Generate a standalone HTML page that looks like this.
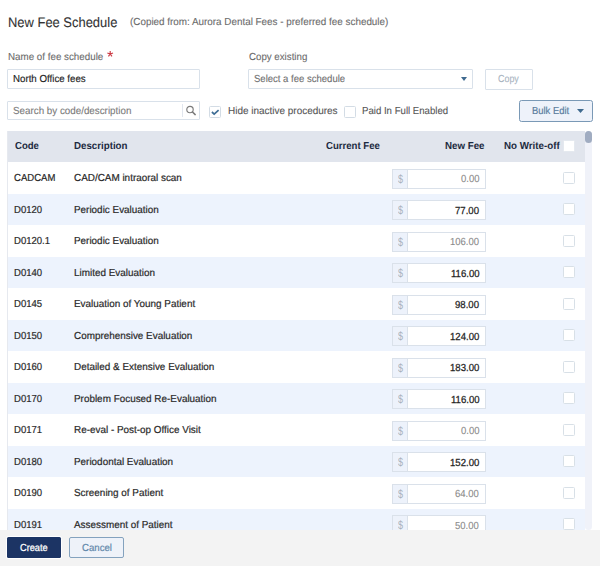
<!DOCTYPE html>
<html><head><meta charset="utf-8">
<style>
*{box-sizing:border-box;margin:0;padding:0}
html,body{width:600px;height:566px;overflow:hidden;background:#fff;font-family:"Liberation Sans",sans-serif;position:relative}
.abs{position:absolute}
.t{position:absolute;white-space:nowrap;line-height:1;transform-origin:0 0;text-rendering:geometricPrecision;font-family:"Liberation Sans",sans-serif}
.inp{border:1px solid #d9e1ea;border-radius:1px;background:#fff}
.table{position:absolute;left:7px;top:131px;width:578px;height:399px;overflow:hidden;border-left:1px solid #e6e9ef}
.thead{position:absolute;left:0;top:0;width:578px;height:31px;background:#e1e5ed}
.row{position:absolute;left:0;width:578px;height:31.5px}
.addon{position:absolute;left:384px;top:6.5px;width:15px;height:20px;background:#edf2fb;border:1px solid #dae1ea;border-right:none}
.fee{position:absolute;left:399px;top:6.5px;width:79px;height:20px;background:#fff;border:1px solid #dae1ea}
.rcb{position:absolute;left:555.3px;top:9.7px;width:12px;height:12px;border:1px solid #d8e0e7;border-radius:1.5px;background:#fff}
.sbtrack{position:absolute;left:585px;top:130.5px;width:7px;height:399px;background:#f0f2f9;border-radius:3.5px}
.sbthumb{position:absolute;left:585px;top:130.5px;width:7.3px;height:12.5px;background:#a0acc1;border-radius:3.6px}
.footer{position:absolute;left:0;top:530px;width:600px;height:36px;background:#f3f3f3}
.btn{position:absolute;top:537.2px;height:21.3px}
.req{position:absolute;left:106.5px;top:51px;color:#c9333c;font-size:14px;line-height:12px}
</style></head><body>
<svg class="abs" style="left:0;top:0" width="600" height="70" viewBox="0 0 600 70"><path d="M110.20 54.00L110.20 51.00M110.20 54.00L113.05 53.07M110.20 54.00L111.96 56.43M110.20 54.00L108.44 56.43M110.20 54.00L107.35 53.07" stroke="#cc3a44" stroke-width="1.15" stroke-linecap="butt" fill="none"/></svg>
<div class="abs inp" style="left:7px;top:69px;width:193px;height:20px"></div>
<div class="abs inp" style="left:248px;top:69px;width:225px;height:20px"></div>
<svg class="abs" style="left:461px;top:77px" width="6" height="4" viewBox="0 0 6 4"><path d="M0 0H6L3 4Z" fill="#3f6a8f"/></svg>
<div class="abs inp" style="left:485px;top:69px;width:48px;height:20.5px"></div>

<div class="abs inp" style="left:7px;top:100.5px;width:193px;height:19.5px"></div>
<div class="abs" style="left:182px;top:103.5px;width:1px;height:13px;background:#e1e6ee"></div>
<svg class="abs" style="left:185px;top:105px" width="12" height="12" viewBox="0 0 12 12"><circle cx="5" cy="4.5" r="3.2" fill="none" stroke="#7a7a7a" stroke-width="1.15"/><path d="M7.5 7L10.2 9.6" stroke="#7a7a7a" stroke-width="1.5" stroke-linecap="round"/></svg>

<div class="abs" style="left:209px;top:105.5px;width:12px;height:12px;border:1px solid #d3dce5;border-radius:1.5px;background:#fff"></div>
<svg class="abs" style="left:209px;top:105.5px" width="12" height="12" viewBox="0 0 12 12"><path d="M2.9 6L5.2 8.1L9.6 4.1" fill="none" stroke="#3f6e96" stroke-width="1.7"/></svg>
<div class="abs" style="left:344px;top:105.5px;width:12px;height:12px;border:1px solid #d3dce5;border-radius:1.5px;background:#fff"></div>

<div class="abs" style="left:519px;top:100px;width:74px;height:21.5px;border:1.2px solid #7a99b6;border-radius:2.5px;background:#eef2fa"></div>
<svg class="abs" style="left:577px;top:109px" width="7" height="4" viewBox="0 0 7 4"><path d="M0 0H7L3.5 4Z" fill="#3f6a8f"/></svg>

<div class="table">
<div class="thead"><div class="rcb" style="top:9.3px;border-color:#e4e9ef"></div></div>
<div class="row" style="top:31.0px;background:#ffffff"><div class="addon"></div><div class="fee"></div><div class="rcb"></div></div>
<div class="row" style="top:62.5px;background:#edf3fd"><div class="addon"></div><div class="fee"></div><div class="rcb"></div></div>
<div class="row" style="top:94.0px;background:#ffffff"><div class="addon"></div><div class="fee"></div><div class="rcb"></div></div>
<div class="row" style="top:125.5px;background:#edf3fd"><div class="addon"></div><div class="fee"></div><div class="rcb"></div></div>
<div class="row" style="top:157.0px;background:#ffffff"><div class="addon"></div><div class="fee"></div><div class="rcb"></div></div>
<div class="row" style="top:188.5px;background:#edf3fd"><div class="addon"></div><div class="fee"></div><div class="rcb"></div></div>
<div class="row" style="top:220.0px;background:#ffffff"><div class="addon"></div><div class="fee"></div><div class="rcb"></div></div>
<div class="row" style="top:251.5px;background:#edf3fd"><div class="addon"></div><div class="fee"></div><div class="rcb"></div></div>
<div class="row" style="top:283.0px;background:#ffffff"><div class="addon"></div><div class="fee"></div><div class="rcb"></div></div>
<div class="row" style="top:314.5px;background:#edf3fd"><div class="addon"></div><div class="fee"></div><div class="rcb"></div></div>
<div class="row" style="top:346.0px;background:#ffffff"><div class="addon"></div><div class="fee"></div><div class="rcb"></div></div>
<div class="row" style="top:377.5px;background:#edf3fd"><div class="addon"></div><div class="fee"></div><div class="rcb"></div></div>
</div>
<div class="sbtrack"></div>
<div class="sbthumb"></div>

<div class="footer"></div>
<div class="btn" style="left:7.3px;width:54px;background:#1c3464;border-radius:1.5px;box-shadow:0 0 0 1px #fff"></div>
<div class="btn" style="left:69px;width:55px;background:#eef2f9;border:1.2px solid #84a2be;border-radius:2px"></div>
<div class="t" style="left:7.94px;top:15.72px;font-size:13.8px;color:#333;transform:scaleX(0.9379);-webkit-text-stroke:0.1px #333;">New Fee Schedule</div>
<div class="t" style="left:130.00px;top:17.63px;font-size:10.2px;color:#6b6b6b;transform:scaleX(0.9686);-webkit-text-stroke:0.1px #6b6b6b;">(Copied from: Aurora Dental Fees - preferred fee schedule)</div>
<div class="t" style="left:8.00px;top:53.23px;font-size:10.2px;color:#6b6b6b;transform:scaleX(0.9614);-webkit-text-stroke:0.1px #6b6b6b;">Name of fee schedule</div>
<div class="t" style="left:13.00px;top:75.43px;font-size:10.2px;color:#222;transform:scaleX(0.9533);-webkit-text-stroke:0.15px #222;">North Office fees</div>
<div class="t" style="left:249.00px;top:53.23px;font-size:10.2px;color:#6b6b6b;transform:scaleX(0.9530);-webkit-text-stroke:0.1px #6b6b6b;">Copy existing</div>
<div class="t" style="left:253.60px;top:75.43px;font-size:10.2px;color:#6f6f6f;transform:scaleX(0.9351);-webkit-text-stroke:0.1px #6f6f6f;">Select a fee schedule</div>
<div class="t" style="left:498.00px;top:75.43px;font-size:10.2px;color:#a9b4bf;transform:scaleX(0.8749);-webkit-text-stroke:0.1px #a9b4bf;">Copy</div>
<div class="t" style="left:12.80px;top:106.83px;font-size:10.2px;color:#7a7a7a;transform:scaleX(0.9630);-webkit-text-stroke:0.1px #7a7a7a;">Search by code/description</div>
<div class="t" style="left:227.80px;top:107.33px;font-size:10.2px;color:#555;transform:scaleX(0.9774);-webkit-text-stroke:0.1px #555;">Hide inactive procedures</div>
<div class="t" style="left:362.00px;top:107.33px;font-size:10.2px;color:#555;transform:scaleX(0.9452);-webkit-text-stroke:0.1px #555;">Paid In Full Enabled</div>
<div class="t" style="left:531.70px;top:106.63px;font-size:10.2px;color:#5a7d9e;transform:scaleX(0.9239);-webkit-text-stroke:0.2px #5a7d9e;">Bulk Edit</div>
<div class="t" style="left:14.50px;top:142.33px;font-size:10.2px;color:#1c2a40;font-weight:700;transform:scaleX(0.9398);">Code</div>
<div class="t" style="left:74.25px;top:142.33px;font-size:10.2px;color:#1c2a40;font-weight:700;transform:scaleX(0.9540);">Description</div>
<div class="t" style="left:325.50px;top:142.33px;font-size:10.2px;color:#1c2a40;font-weight:700;transform:scaleX(0.9425);">Current Fee</div>
<div class="t" style="left:444.70px;top:142.33px;font-size:10.2px;color:#1c2a40;font-weight:700;transform:scaleX(0.9552);">New Fee</div>
<div class="t" style="left:503.70px;top:142.33px;font-size:10.2px;color:#1c2a40;font-weight:700;transform:scaleX(0.9591);">No Write-off</div>
<div class="t" style="left:20.40px;top:543.93px;font-size:10.2px;color:#ffffff;transform:scaleX(0.9058);-webkit-text-stroke:0.25px #ffffff;">Create</div>
<div class="t" style="left:81.60px;top:543.93px;font-size:10.2px;color:#6388ab;transform:scaleX(0.9444);-webkit-text-stroke:0.2px #6388ab;">Cancel</div>
<div class="t" style="left:14.10px;top:174.43px;font-size:10.2px;color:#2a2a2a;transform:scaleX(0.9362);-webkit-text-stroke:0.2px #2a2a2a;">CADCAM</div>
<div class="t" style="left:74.30px;top:174.43px;font-size:10.2px;color:#2a2a2a;transform:scaleX(0.9721);-webkit-text-stroke:0.2px #2a2a2a;">CAD/CAM intraoral scan</div>
<div class="t" style="left:397.80px;top:172.60px;font-size:12px;color:#aab2bd;transform:scaleX(0.7500);">$</div>
<div class="t" style="left:460.68px;top:175.03px;font-size:10.2px;color:#8a8a8a;transform:scaleX(0.9335);-webkit-text-stroke:0.1px #8a8a8a;">0.00</div>
<div class="t" style="left:14.10px;top:205.93px;font-size:10.2px;color:#2a2a2a;transform:scaleX(0.9362);-webkit-text-stroke:0.2px #2a2a2a;">D0120</div>
<div class="t" style="left:74.30px;top:205.93px;font-size:10.2px;color:#2a2a2a;transform:scaleX(0.9721);-webkit-text-stroke:0.2px #2a2a2a;">Periodic Evaluation</div>
<div class="t" style="left:397.80px;top:204.10px;font-size:12px;color:#aab2bd;transform:scaleX(0.7500);">$</div>
<div class="t" style="left:455.20px;top:206.53px;font-size:10.2px;color:#222;transform:scaleX(0.9408);-webkit-text-stroke:0.25px #222;">77.00</div>
<div class="t" style="left:14.10px;top:237.43px;font-size:10.2px;color:#2a2a2a;transform:scaleX(0.9362);-webkit-text-stroke:0.2px #2a2a2a;">D0120.1</div>
<div class="t" style="left:74.30px;top:237.43px;font-size:10.2px;color:#2a2a2a;transform:scaleX(0.9721);-webkit-text-stroke:0.2px #2a2a2a;">Periodic Evaluation</div>
<div class="t" style="left:397.80px;top:235.60px;font-size:12px;color:#aab2bd;transform:scaleX(0.7500);">$</div>
<div class="t" style="left:450.10px;top:238.03px;font-size:10.2px;color:#8a8a8a;transform:scaleX(0.9335);-webkit-text-stroke:0.1px #8a8a8a;">106.00</div>
<div class="t" style="left:14.10px;top:268.93px;font-size:10.2px;color:#2a2a2a;transform:scaleX(0.9362);-webkit-text-stroke:0.2px #2a2a2a;">D0140</div>
<div class="t" style="left:74.30px;top:268.93px;font-size:10.2px;color:#2a2a2a;transform:scaleX(0.9721);-webkit-text-stroke:0.2px #2a2a2a;">Limited Evaluation</div>
<div class="t" style="left:397.80px;top:267.10px;font-size:12px;color:#aab2bd;transform:scaleX(0.7500);">$</div>
<div class="t" style="left:450.58px;top:269.53px;font-size:10.2px;color:#222;transform:scaleX(0.9408);-webkit-text-stroke:0.25px #222;">116.00</div>
<div class="t" style="left:14.10px;top:300.43px;font-size:10.2px;color:#2a2a2a;transform:scaleX(0.9362);-webkit-text-stroke:0.2px #2a2a2a;">D0145</div>
<div class="t" style="left:74.30px;top:300.43px;font-size:10.2px;color:#2a2a2a;transform:scaleX(0.9721);-webkit-text-stroke:0.2px #2a2a2a;">Evaluation of Young Patient</div>
<div class="t" style="left:397.80px;top:298.60px;font-size:12px;color:#aab2bd;transform:scaleX(0.7500);">$</div>
<div class="t" style="left:455.20px;top:301.03px;font-size:10.2px;color:#222;transform:scaleX(0.9408);-webkit-text-stroke:0.25px #222;">98.00</div>
<div class="t" style="left:14.10px;top:331.93px;font-size:10.2px;color:#2a2a2a;transform:scaleX(0.9362);-webkit-text-stroke:0.2px #2a2a2a;">D0150</div>
<div class="t" style="left:74.30px;top:331.93px;font-size:10.2px;color:#2a2a2a;transform:scaleX(0.9721);-webkit-text-stroke:0.2px #2a2a2a;">Comprehensive Evaluation</div>
<div class="t" style="left:397.80px;top:330.10px;font-size:12px;color:#aab2bd;transform:scaleX(0.7500);">$</div>
<div class="t" style="left:449.87px;top:332.53px;font-size:10.2px;color:#222;transform:scaleX(0.9408);-webkit-text-stroke:0.25px #222;">124.00</div>
<div class="t" style="left:14.10px;top:363.43px;font-size:10.2px;color:#2a2a2a;transform:scaleX(0.9362);-webkit-text-stroke:0.2px #2a2a2a;">D0160</div>
<div class="t" style="left:74.30px;top:363.43px;font-size:10.2px;color:#2a2a2a;transform:scaleX(0.9721);-webkit-text-stroke:0.2px #2a2a2a;">Detailed &amp; Extensive Evaluation</div>
<div class="t" style="left:397.80px;top:361.60px;font-size:12px;color:#aab2bd;transform:scaleX(0.7500);">$</div>
<div class="t" style="left:449.87px;top:364.03px;font-size:10.2px;color:#222;transform:scaleX(0.9408);-webkit-text-stroke:0.25px #222;">183.00</div>
<div class="t" style="left:14.10px;top:394.93px;font-size:10.2px;color:#2a2a2a;transform:scaleX(0.9362);-webkit-text-stroke:0.2px #2a2a2a;">D0170</div>
<div class="t" style="left:74.30px;top:394.93px;font-size:10.2px;color:#2a2a2a;transform:scaleX(0.9721);-webkit-text-stroke:0.2px #2a2a2a;">Problem Focused Re-Evaluation</div>
<div class="t" style="left:397.80px;top:393.10px;font-size:12px;color:#aab2bd;transform:scaleX(0.7500);">$</div>
<div class="t" style="left:450.58px;top:395.53px;font-size:10.2px;color:#222;transform:scaleX(0.9408);-webkit-text-stroke:0.25px #222;">116.00</div>
<div class="t" style="left:14.10px;top:426.43px;font-size:10.2px;color:#2a2a2a;transform:scaleX(0.9362);-webkit-text-stroke:0.2px #2a2a2a;">D0171</div>
<div class="t" style="left:74.30px;top:426.43px;font-size:10.2px;color:#2a2a2a;transform:scaleX(0.9721);-webkit-text-stroke:0.2px #2a2a2a;">Re-eval - Post-op Office Visit</div>
<div class="t" style="left:397.80px;top:424.60px;font-size:12px;color:#aab2bd;transform:scaleX(0.7500);">$</div>
<div class="t" style="left:460.68px;top:427.03px;font-size:10.2px;color:#8a8a8a;transform:scaleX(0.9335);-webkit-text-stroke:0.1px #8a8a8a;">0.00</div>
<div class="t" style="left:14.10px;top:457.93px;font-size:10.2px;color:#2a2a2a;transform:scaleX(0.9362);-webkit-text-stroke:0.2px #2a2a2a;">D0180</div>
<div class="t" style="left:74.30px;top:457.93px;font-size:10.2px;color:#2a2a2a;transform:scaleX(0.9721);-webkit-text-stroke:0.2px #2a2a2a;">Periodontal Evaluation</div>
<div class="t" style="left:397.80px;top:456.10px;font-size:12px;color:#aab2bd;transform:scaleX(0.7500);">$</div>
<div class="t" style="left:449.87px;top:458.53px;font-size:10.2px;color:#222;transform:scaleX(0.9408);-webkit-text-stroke:0.25px #222;">152.00</div>
<div class="t" style="left:14.10px;top:489.43px;font-size:10.2px;color:#2a2a2a;transform:scaleX(0.9362);-webkit-text-stroke:0.2px #2a2a2a;">D0190</div>
<div class="t" style="left:74.30px;top:489.43px;font-size:10.2px;color:#2a2a2a;transform:scaleX(0.9721);-webkit-text-stroke:0.2px #2a2a2a;">Screening of Patient</div>
<div class="t" style="left:397.80px;top:487.60px;font-size:12px;color:#aab2bd;transform:scaleX(0.7500);">$</div>
<div class="t" style="left:455.39px;top:490.03px;font-size:10.2px;color:#8a8a8a;transform:scaleX(0.9335);-webkit-text-stroke:0.1px #8a8a8a;">64.00</div>
<div class="t" style="left:14.10px;top:520.93px;font-size:10.2px;color:#2a2a2a;transform:scaleX(0.9362);-webkit-text-stroke:0.2px #2a2a2a;">D0191</div>
<div class="t" style="left:74.30px;top:520.93px;font-size:10.2px;color:#2a2a2a;transform:scaleX(0.9721);-webkit-text-stroke:0.2px #2a2a2a;">Assessment of Patient</div>
<div class="t" style="left:397.80px;top:519.10px;font-size:12px;color:#aab2bd;transform:scaleX(0.7500);">$</div>
<div class="t" style="left:455.39px;top:521.53px;font-size:10.2px;color:#8a8a8a;transform:scaleX(0.9335);-webkit-text-stroke:0.1px #8a8a8a;">50.00</div>
</body></html>
